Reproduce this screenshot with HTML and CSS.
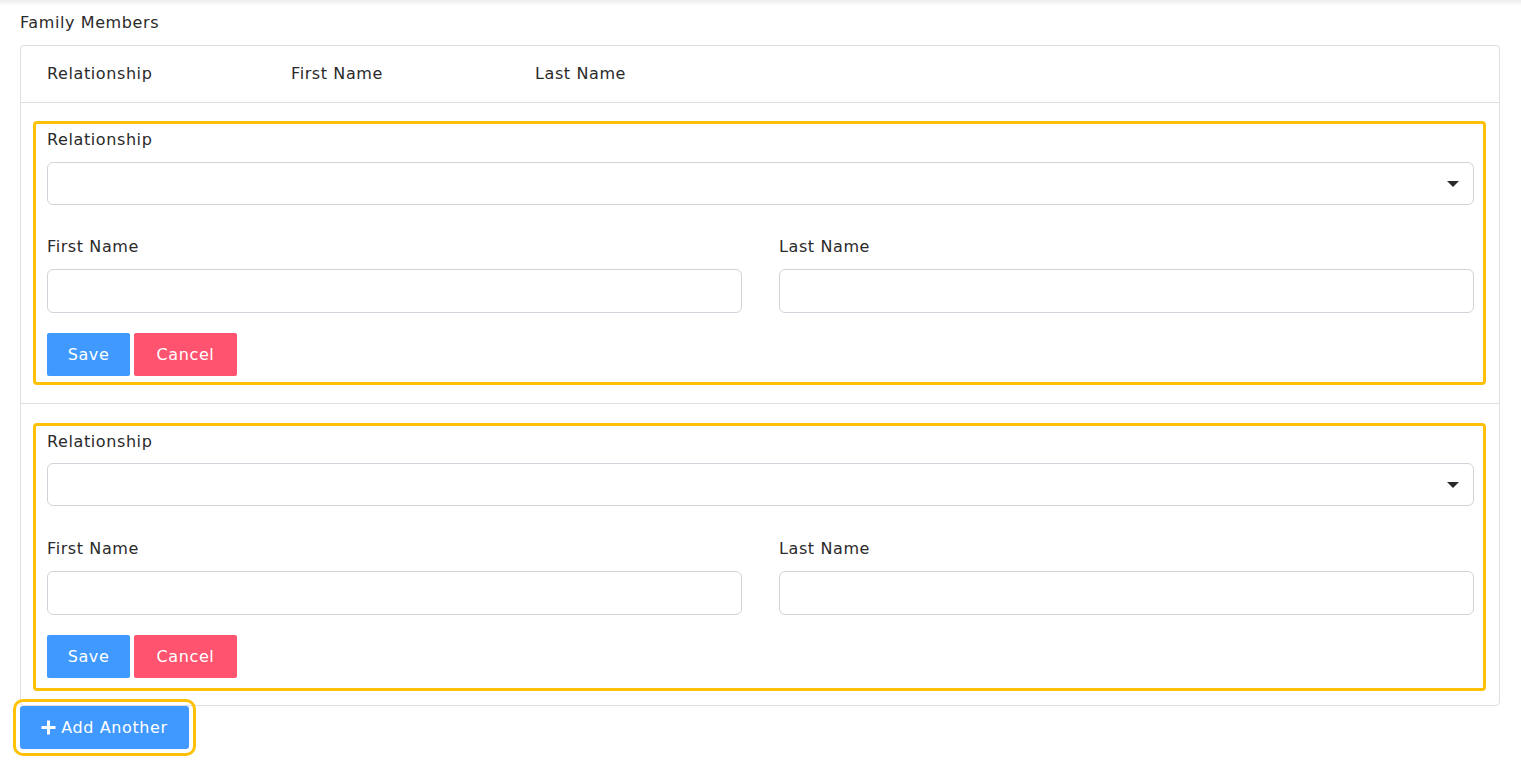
FILE: index.html
```html
<!DOCTYPE html>
<html>
<head>
<meta charset="utf-8">
<title>Family Members</title>
<link rel="stylesheet" href="styles.css">
</head>
<body>
<div class="topshade"></div>
<div class="page">
  <div class="section-title">Family Members</div>
  <div class="card">
    <div class="card-head">
      <div class="col">Relationship</div>
      <div class="col">First Name</div>
      <div class="col">Last Name</div>
    </div>
    <div class="row-item">
      <div class="editor">
        <div class="group">
          <label class="lbl">Relationship</label>
          <div class="select"><span class="caret"></span></div>
        </div>
        <div class="two">
          <div class="group">
            <label class="lbl">First Name</label>
            <div class="input"></div>
          </div>
          <div class="group">
            <label class="lbl">Last Name</label>
            <div class="input"></div>
          </div>
        </div>
        <div class="actions">
          <button class="btn btn-blue btn-save">Save</button>
          <button class="btn btn-red btn-cancel">Cancel</button>
        </div>
      </div>
    </div>
    <div class="row-item last">
      <div class="editor">
        <div class="group">
          <label class="lbl">Relationship</label>
          <div class="select"><span class="caret"></span></div>
        </div>
        <div class="two">
          <div class="group">
            <label class="lbl">First Name</label>
            <div class="input"></div>
          </div>
          <div class="group">
            <label class="lbl">Last Name</label>
            <div class="input"></div>
          </div>
        </div>
        <div class="actions">
          <button class="btn btn-blue btn-save">Save</button>
          <button class="btn btn-red btn-cancel">Cancel</button>
        </div>
      </div>
    </div>
  </div>
  <div class="add-wrap">
    <button class="btn btn-blue btn-add"><svg class="plus" width="15" height="15" viewBox="0 0 15 15"><path d="M7.5 0.5v14M0.5 7.5h14" stroke="#fff" stroke-width="3"/></svg>Add Another</button>
  </div>
</div>
</body>
</html>
```
FILE: styles.css
```css
html, body {
  margin: 0;
  padding: 0;
  background: #fff;
}
body {
  font-family: "DejaVu Sans", "Noto Sans", sans-serif;
  color: #2a2a2a;
  font-size: 16px;
  letter-spacing: 0.6px;
}
.topshade {
  height: 6px;
  background: linear-gradient(#ececec, #ffffff);
}
.page {
  padding: 6px 21px 14px 20px;
}
.section-title {
  line-height: 21px;
  margin-bottom: 12px;
}
.card {
  border: 1px solid #dfdfdf;
  border-radius: 4px;
}
.card-head {
  display: flex;
  height: 56px;
  align-items: center;
  padding-left: 26px;
  border-bottom: 1px solid #dfdfdf;
  line-height: 21px;
}
.card-head .col {
  width: 244px;
  margin-top: -2px;
}
.row-item {
  padding: 18px 13px 18px 12px;
  border-bottom: 1px solid #dfdfdf;
}
.row-item.last {
  border-bottom: none;
  padding-top: 19px;
  padding-bottom: 14px;
}
.editor {
  border: 3px solid #ffc107;
  border-radius: 4px;
  padding: 5px 9px 6px 11px;
}
.row-item.last .editor {
  padding-bottom: 10px;
}
.group {
  display: flex;
  flex-direction: column;
  margin-bottom: 20px;
}
.lbl {
  line-height: 21px;
  margin-bottom: 12px;
}
.select, .input {
  border: 1px solid #cfd4da;
  border-radius: 6px;
  box-sizing: border-box;
  background: #fff;
}
.select {
  height: 43px;
  display: flex;
  align-items: center;
  justify-content: flex-end;
  padding-right: 14px;
  margin-bottom: 11px;
}
.row-item.last .select {
  margin-top: -1px;
  margin-bottom: 12px;
}
.caret {
  width: 0;
  height: 0;
  border-left: 6px solid transparent;
  border-right: 6px solid transparent;
  border-top: 6px solid #2a2a2a;
  margin-top: 1px;
}
.input {
  height: 44px;
}
.two {
  display: grid;
  grid-template-columns: 1fr 1fr;
  column-gap: 37px;
}
.actions {
  display: flex;
  gap: 4px;
}
.btn {
  font-family: inherit;
  font-size: 16px;
  letter-spacing: 0.6px;
  color: #fff;
  border: none;
  border-radius: 2px;
  height: 43px;
  padding: 0;
  cursor: pointer;
}
.btn-save {
  width: 83px;
}
.btn-cancel {
  width: 103px;
}
.btn-blue {
  background: #4099ff;
}
.btn-red {
  background: #ff5370;
}
.add-wrap {
  display: flex;
}
.btn-add {
  display: flex;
  align-items: center;
  gap: 5px;
  width: 169px;
  justify-content: center;
  outline: 3px solid #ffc107;
  outline-offset: 4px;
  border-radius: 3px;
}
.plus {
  flex: none;
}
```
